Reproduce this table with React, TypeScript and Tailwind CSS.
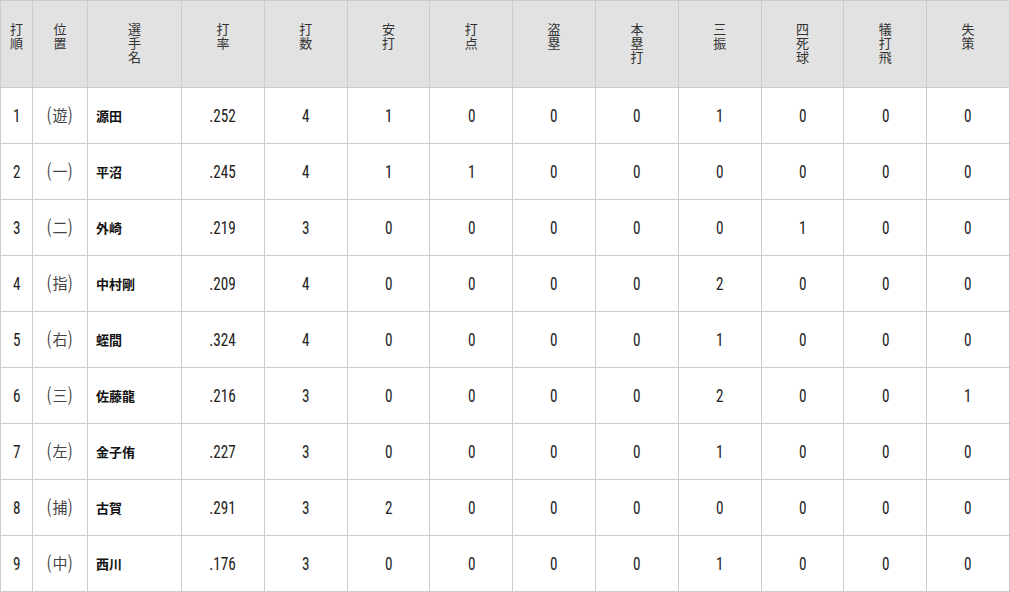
import React from "react";

const headers = [
  ["打", "順"],
  ["位", "置"],
  ["選", "手", "名"],
  ["打", "率"],
  ["打", "数"],
  ["安", "打"],
  ["打", "点"],
  ["盗", "塁"],
  ["本", "塁", "打"],
  ["三", "振"],
  ["四", "死", "球"],
  ["犠", "打", "飛"],
  ["失", "策"],
];

const rows: (string | number)[][] = [
  [1, "遊", "源田", ".252", 4, 1, 0, 0, 0, 1, 0, 0, 0],
  [2, "一", "平沼", ".245", 4, 1, 1, 0, 0, 0, 0, 0, 0],
  [3, "二", "外崎", ".219", 3, 0, 0, 0, 0, 0, 1, 0, 0],
  [4, "指", "中村剛", ".209", 4, 0, 0, 0, 0, 2, 0, 0, 0],
  [5, "右", "蛭間", ".324", 4, 0, 0, 0, 0, 1, 0, 0, 0],
  [6, "三", "佐藤龍", ".216", 3, 0, 0, 0, 0, 2, 0, 0, 1],
  [7, "左", "金子侑", ".227", 3, 0, 0, 0, 0, 1, 0, 0, 0],
  [8, "捕", "古賀", ".291", 3, 2, 0, 0, 0, 0, 0, 0, 0],
  [9, "中", "西川", ".176", 3, 0, 0, 0, 0, 1, 0, 0, 0],
];

const widths = ["w-[32px]", "w-[55px]", "w-[94px]"];
const cond = '"Roboto Condensed", "Liberation Sans Narrow", Roboto, "Noto Sans CJK JP", sans-serif';
const cjk = '"Noto Sans CJK JP", sans-serif';

export default function App() {
  return (
    <div className="w-[1010px] h-[592px] bg-white overflow-hidden">
      <table className="table-fixed border-collapse w-[1010px] text-[#222]">
        <colgroup>
          {headers.map((_, i) => (
            <col key={i} className={i < 3 ? widths[i] : "w-[82.8px]"} />
          ))}
        </colgroup>
        <thead>
          <tr className="h-[87px] bg-[#e2e2e2]">
            {headers.map((h, i) => (
              <th
                key={i}
                className="border border-[#cccccc] align-top pt-[21px] font-normal text-[13px] leading-[14px] text-[#333]"
                style={{ fontFamily: cjk }}
              >
                <div className="flex flex-col items-center">
                  {h.map((c, j) => (
                    <span key={j}>{c}</span>
                  ))}
                </div>
              </th>
            ))}
          </tr>
        </thead>
        <tbody>
          {rows.map((r, ri) => (
            <tr key={ri} className="h-[56px]">
              {r.map((v, ci) => {
                if (ci === 2) {
                  return (
                    <td
                      key={ci}
                      className="border border-[#cccccc] align-middle text-left pl-[8px] font-semibold text-[13px] text-[#111]"
                      style={{ fontFamily: cjk }}
                    >
                      {v}
                    </td>
                  );
                }
                if (ci === 1) {
                  return (
                    <td key={ci} className="border border-[#cccccc] align-middle text-center text-[#444]">
                      <span className="inline-flex items-center text-[15px]" style={{ fontFamily: cond }}>
                        <span className="inline-block text-[19px] scale-x-[0.7]">(</span>
                        <span style={{ fontFamily: cjk }}>{v}</span>
                        <span className="inline-block text-[19px] scale-x-[0.7]">)</span>
                      </span>
                    </td>
                  );
                }
                return (
                  <td key={ci} className="border border-[#cccccc] align-middle text-center">
                    <span className="inline-block text-[19px] leading-none scale-x-[0.8] text-[#222]" style={{ fontFamily: cond }}>
                      {v}
                    </span>
                  </td>
                );
              })}
            </tr>
          ))}
        </tbody>
      </table>
    </div>
  );
}
